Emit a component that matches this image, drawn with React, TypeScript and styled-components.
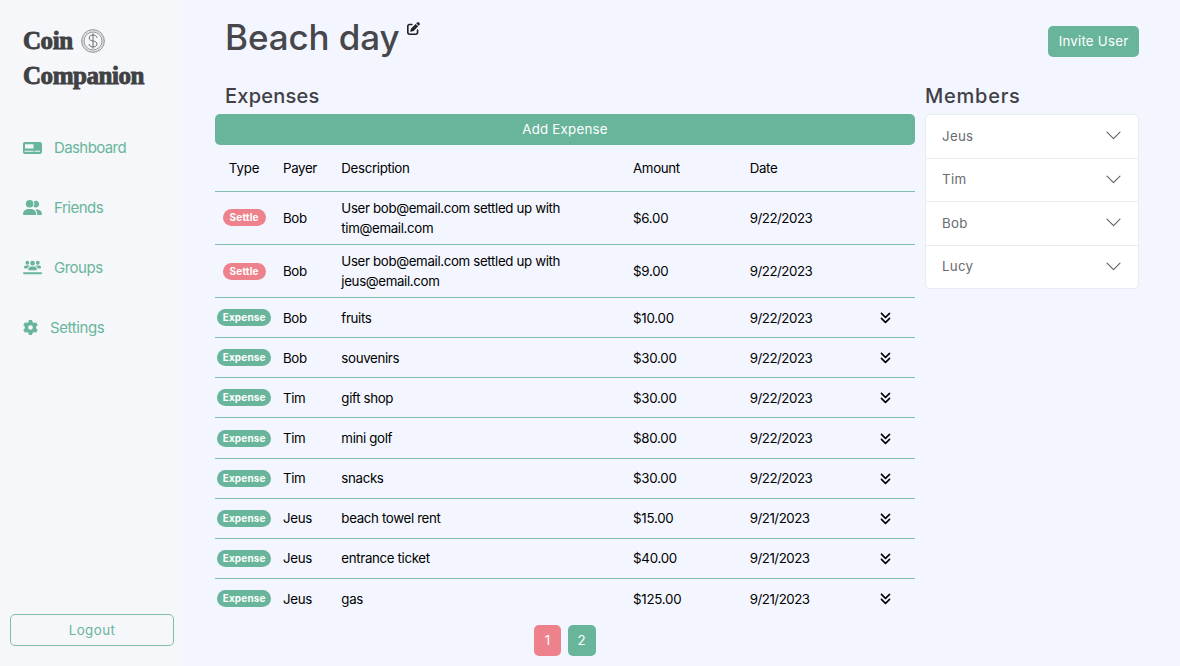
import React from 'react';
import styled, { createGlobalStyle } from 'styled-components';
import { FaUserGroup, FaUsersLine, FaGear, FaPenToSquare, FaAnglesDown } from 'react-icons/fa6';

const GREEN = '#69b59b';
const PINK = '#ee828c';

const GlobalStyle = createGlobalStyle`
  * { box-sizing: border-box; }
  body { margin: 0; background: #f3f6ff; font-family: Inter, sans-serif; color: #000; overflow: hidden; }
  h1, h2 { margin: 0; }
  button { margin: 0; padding: 0; border: 0; font-family: inherit; }
`;

const Page = styled.div`
  display: flex;
  width: 1180px;
  height: 666px;
`;

const Sidebar = styled.aside`
  display: flex;
  flex-direction: column;
  width: 184px;
  padding: 23px 10px 20px;
  background: #f5f7fa;
`;

const Brand = styled.div`
  display: flex;
  flex-direction: column;
  padding-left: 13px;
  font: 700 25px/35px 'Liberation Serif', serif;
  color: #414144;
  -webkit-text-stroke: 0.9px #414144;
`;

const BrandLine = styled.span`
  display: flex;
  align-items: center;
  gap: 8px;
  white-space: nowrap;
  letter-spacing: -0.45px;
`;

const Nav = styled.nav`
  display: flex;
  flex-direction: column;
  margin-top: 25px;
  padding-left: 13px;
`;

const NavItem = styled.a<{ $spacing: number }>`
  display: flex;
  align-items: center;
  gap: 12px;
  height: 59.8px;
  font-size: 15px;
  letter-spacing: ${(p) => p.$spacing}px;
  color: ${GREEN};
`;

const LogoutButton = styled.button`
  height: 32px;
  margin-top: auto;
  border: 1px solid #7fbfaa;
  border-radius: 5px;
  background: transparent;
  color: ${GREEN};
  font-size: 13.3px;
  letter-spacing: 0.45px;
`;

const Main = styled.main`
  display: flex;
  flex-direction: column;
  width: 955px;
  padding-left: 31px;
`;

const Header = styled.header`
  display: flex;
  justify-content: space-between;
  height: 80px;
`;

const Title = styled.h1`
  display: flex;
  align-items: flex-start;
  gap: 7px;
  padding: 13px 0 0 10px;
  font-size: 35px;
  line-height: 48px;
  font-weight: 500;
  letter-spacing: -0.1px;
  color: #47474b;
  svg { margin-top: 9px; }
`;

const Button = styled.button<{ $width?: number }>`
  flex: none;
  width: ${(p) => (p.$width ? `${p.$width}px` : '100%')};
  height: 31px;
  padding-bottom: 1px;
  border-radius: 5px;
  background: ${GREEN};
  color: #fff;
  font-size: 13.3px;
  letter-spacing: 0.22px;
`;

const InviteSlot = styled.div`
  padding-top: 26px;
`;

const Columns = styled.div`
  display: flex;
  gap: 10px;
`;

const ExpensePanel = styled.section`
  width: 700px;
`;

const MemberPanel = styled.section`
  width: 214px;
`;

const Heading = styled.h2<{ $indent: number; $spacing: number }>`
  height: 34px;
  padding-left: ${(p) => p.$indent}px;
  font-size: 20px;
  line-height: 32px;
  font-weight: 500;
  letter-spacing: ${(p) => p.$spacing}px;
  color: #414145;
`;

const Row = styled.div<{ $height: number; $last?: boolean }>`
  display: grid;
  grid-template-columns: 1fr 1fr 5fr 2fr 2fr 1fr;
  align-items: center;
  height: ${(p) => p.$height}px;
  border-bottom: ${(p) => (p.$last ? 0 : 1)}px solid #7fbdae;
  font-size: 13.3px;
  line-height: 19.8px;
`;

const Cell = styled.div<{ $center?: boolean; $spacing?: number }>`
  display: ${(p) => (p.$center ? 'flex' : 'block')};
  justify-content: center;
  padding-top: ${(p) => (p.$center ? 0 : 2)}px;
  padding-left: ${(p) => (p.$center ? 0 : 9.7)}px;
  min-width: 0;
  white-space: pre-line;
  letter-spacing: ${(p) => p.$spacing ?? -0.35}px;
`;

const TypeHeader = styled(Cell)`
  padding-top: 2px;
  letter-spacing: -0.1px;
`;

const Badge = styled.span<{ $settle: boolean }>`
  flex: none;
  width: ${(p) => (p.$settle ? 43 : 54.5)}px;
  height: 17px;
  border-radius: 9px;
  background: ${(p) => (p.$settle ? PINK : GREEN)};
  color: #fff;
  font-size: 10px;
  line-height: 17.5px;
  font-weight: 700;
  letter-spacing: 0.15px;
  text-align: center;
`;

const Pagination = styled.div`
  display: flex;
  justify-content: center;
  gap: 6.5px;
  margin-top: 6px;
`;

const PageButton = styled(Button)<{ $active?: boolean }>`
  padding-bottom: 0;
  background: ${(p) => (p.$active ? PINK : GREEN)};
`;

const MemberList = styled.div`
  border: 1px solid #e8ebf2;
  border-radius: 5px;
  background: #fff;
`;

const Member = styled.div`
  display: flex;
  align-items: center;
  justify-content: space-between;
  height: 43.5px;
  padding: 0 17px 1px 16px;
  font-size: 13.3px;
  letter-spacing: 0.3px;
  color: #6b6b6e;
  & + & { border-top: 1px solid #e8ebf2; }
  &:first-child { height: 42.5px; }
`;

const CoinIcon = () => (
  <svg width="24" height="24" viewBox="0 0 24 24" fill="none" stroke="#6d6d70" strokeWidth="0.7">
    <circle cx="12" cy="12" r="11.4" />
    <circle cx="12" cy="12" r="10.2" strokeWidth="0.6" strokeDasharray="0.7 0.7" />
    <circle cx="12" cy="12" r="9" />
    <path d="M16 8.800C15.800 7 14.200 6.100 12 6.100S8.200 7.100 8.200 9c0 4.100 7.800 1.900 7.800 6 0 1.900-1.700 2.900-4 2.900S8.100 16.900 8 15M12 4.300v15.400" strokeWidth="1" />
  </svg>
);

const DashboardIcon = () => (
  <svg width="19" height="12" viewBox="0 0 19 12">
    <path fill={GREEN} fillRule="evenodd" d="M2 0h15a2 2 0 0 1 2 2v8a2 2 0 0 1-2 2H2a2 2 0 0 1-2-2V2a2 2 0 0 1 2-2zM2 2.200v4.300h8.500V2.200zM1.500 8.800v1h9v-1zM11.600 8.800v1h5.400v-1z" />
  </svg>
);

const Chevron = () => (
  <svg width="15" height="9" viewBox="0 0 15 9" fill="none" stroke="#606064" strokeWidth="1.1" strokeLinecap="round" strokeLinejoin="round">
    <path d="M1 1.200l6.500 6.400L14 1.200" />
  </svg>
);

const expenses = [
  ['Settle', 'Bob', 'User bob@email.com settled up with\ntim@email.com', '$6.00', '9/22/2023'],
  ['Settle', 'Bob', 'User bob@email.com settled up with\njeus@email.com', '$9.00', '9/22/2023'],
  ['Expense', 'Bob', 'fruits', '$10.00', '9/22/2023'],
  ['Expense', 'Bob', 'souvenirs', '$30.00', '9/22/2023'],
  ['Expense', 'Tim', 'gift shop', '$30.00', '9/22/2023'],
  ['Expense', 'Tim', 'mini golf', '$80.00', '9/22/2023'],
  ['Expense', 'Tim', 'snacks', '$30.00', '9/22/2023'],
  ['Expense', 'Jeus', 'beach towel rent', '$15.00', '9/21/2023'],
  ['Expense', 'Jeus', 'entrance ticket', '$40.00', '9/21/2023'],
  ['Expense', 'Jeus', 'gas', '$125.00', '9/21/2023'],
];

export default function App() {
  return (
    <Page>
      <GlobalStyle />
      <Sidebar>
        <Brand>
          <BrandLine>Coin <CoinIcon /></BrandLine>
          <BrandLine>Companion</BrandLine>
        </Brand>
        <Nav>
          <NavItem $spacing={-0.6}><DashboardIcon />Dashboard</NavItem>
          <NavItem $spacing={-0.5}><FaUserGroup size={19} />Friends</NavItem>
          <NavItem $spacing={-0.5}><FaUsersLine size={19} />Groups</NavItem>
          <NavItem $spacing={-0.4}><FaGear size={15} />Settings</NavItem>
        </Nav>
        <LogoutButton>Logout</LogoutButton>
      </Sidebar>
      <Main>
        <Header>
          <Title>Beach day<FaPenToSquare size={13} color="#222" /></Title>
          <InviteSlot><Button $width={91}>Invite User</Button></InviteSlot>
        </Header>
        <Columns>
          <ExpensePanel>
            <Heading $indent={10} $spacing={0.25}>Expenses</Heading>
            <Button>Add Expense</Button>
            <Row $height={46.8}>
              <TypeHeader $center>Type</TypeHeader>
              <Cell>Payer</Cell>
              <Cell>Description</Cell>
              <Cell>Amount</Cell>
              <Cell>Date</Cell>
            </Row>
            {expenses.map(([type, payer, description, amount, date], i) => (
              <Row key={i} $height={type === 'Settle' ? 53.2 : 40.1} $last={i === expenses.length - 1}>
                <Cell $center><Badge $settle={type === 'Settle'}>{type}</Badge></Cell>
                <Cell>{payer}</Cell>
                <Cell>{description}</Cell>
                <Cell $spacing={-0.25}>{amount}</Cell>
                <Cell $spacing={-0.47}>{date}</Cell>
                {type === 'Expense' && <Cell $center><FaAnglesDown size={13} /></Cell>}
              </Row>
            ))}
            <Pagination>
              <PageButton $width={27} $active>1</PageButton>
              <PageButton $width={28.5}>2</PageButton>
            </Pagination>
          </ExpensePanel>
          <MemberPanel>
            <Heading $indent={0} $spacing={0.75}>Members</Heading>
            <MemberList>
              {['Jeus', 'Tim', 'Bob', 'Lucy'].map((name) => (
                <Member key={name}>{name}<Chevron /></Member>
              ))}
            </MemberList>
          </MemberPanel>
        </Columns>
      </Main>
    </Page>
  );
}
